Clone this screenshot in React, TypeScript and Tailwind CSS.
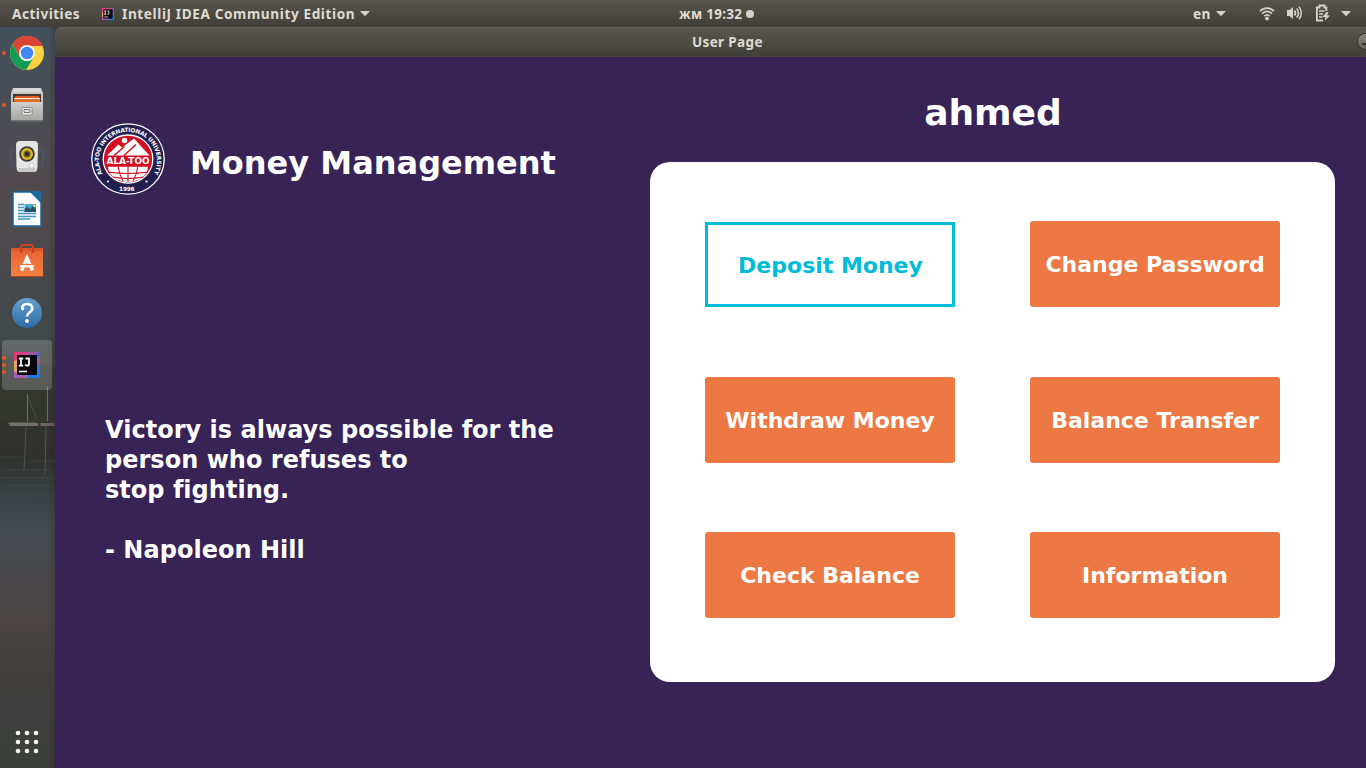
import React from "react";

const actions = [
  { label: "Deposit Money", focused: true },
  { label: "Change Password" },
  { label: "Withdraw Money", lowered: true },
  { label: "Balance Transfer", lowered: true },
  { label: "Check Balance" },
  { label: "Information" },
];

function Caret() {
  return (
    <svg width="10" height="6" viewBox="0 0 10 6" className="shrink-0">
      <path d="M0 0h10L5 5.2z" fill="#d3d2cd" />
    </svg>
  );
}

function IntellijIcon({ size, id }: { size: number; id: string }) {
  return (
    <svg width={size} height={size} viewBox="0 0 26 26">
      <defs>
        <linearGradient id={id} x1="0" y1="0" x2="1" y2="0.9">
          <stop offset="0" stopColor="#f0347e" />
          <stop offset="0.4" stopColor="#c8488c" />
          <stop offset="0.6" stopColor="#3b6fe0" />
          <stop offset="1" stopColor="#127df0" />
        </linearGradient>
      </defs>
      <rect width="26" height="26" fill={"url(#" + id + ")"} />
      <path d="M0 9L3 8v15l-3-4z" fill="#e9a05a" />
      <path d="M0 19l5 4h9v3H0z" fill="#a65ab5" />
      <path d="M15 0h4l7 7v6h-4L14 4z" fill="#9a58a8" />
      <rect x="3" y="3" width="20" height="20" fill="#080808" />
      <path d="M4.800 6.500h4.400M7 6.500v7M4.800 13.600h4.400M11.500 6.500H15v5.200c0 1.400-.7 2-1.900 2-.9 0-1.400-.4-1.900-1" fill="none" stroke="#fff" strokeWidth="1.800" />
      <path d="M5 19.500h8" stroke="#fff" strokeWidth="1.600" />
    </svg>
  );
}

function TopBar() {
  return (
    <header className="flex h-[27px] shrink-0 items-center bg-linear-to-b from-[#57554c] to-[#413f39] pt-px font-['Noto_Sans',sans-serif] text-[14px] font-bold text-[#dfdbd2]">
      <div className="flex w-[679px] items-center pl-3">
        <span className="w-[68px] whitespace-nowrap text-[13.6px] tracking-[0.5px]">Activities</span>
        <span className="ml-[22px] mr-2">
          <IntellijIcon size={12} id="ij-small" />
        </span>
        <span className="w-[234px] whitespace-nowrap text-[13.6px] tracking-[0.61px]">IntelliJ IDEA Community Edition</span>
        <span className="ml-1"><Caret /></span>
      </div>
      <div className="flex grow items-center gap-[3px]">
        <span className="w-[64px] whitespace-nowrap text-[13.5px] tracking-[0.25px]">жм 19:32</span>
        <span className="-mt-px size-2 rounded-full bg-[#d3d2cd]" />
      </div>
      <div className="flex items-center pr-[15px]">
        <span className="w-[18px] text-[13.6px] tracking-[0.3px]">en</span>
        <span className="ml-[5px] mr-[33px]"><Caret /></span>
        <svg width="16" height="14" viewBox="0 0 16 14" fill="none" stroke="#d3d2cd" strokeWidth="1.7">
          <path d="M1 4.200C5 .1 11 .1 15 4.200M3.100 6.700c3-3 6.800-3 9.800 0M5.300 9.200c1.700-1.600 3.700-1.600 5.400 0" />
          <circle cx="8" cy="11.600" r="1.900" fill="#d3d2cd" stroke="none" />
        </svg>
        <svg width="17" height="16" viewBox="0 0 17 16" className="-mt-px ml-[11px]" fill="none" stroke="#d3d2cd" strokeWidth="1.700">
          <path d="M1 5h2.500L7 2v12l-3.500-3H1z" fill="#d3d2cd" stroke="none" />
          <path d="M8.500 5.500c1.200 1.500 1.200 3.500 0 5M10.700 3.500c2.300 2.500 2.300 6.500 0 9" />
          <path d="M13 1.700c3 3.500 3 9.100 0 12.600" strokeWidth="1.500" />
        </svg>
        <svg width="16" height="18" viewBox="0 0 16 18" className="-mt-px ml-[12px]" fill="none" stroke="#d3d2cd" strokeWidth="1.900">
          <path d="M11.300 7V3.500H9.500v-2h-5v2H1.900v13H8" />
          <path d="M4 7h5.500M4 10h4M4 13h3.500" strokeWidth="1.600" />
          <path d="M11.500 8L7.500 13h3l-1 4 5.500-5.500h-3L13.500 8z" fill="#d3d2cd" stroke="none" />
        </svg>
        <span className="ml-[10px]"><Caret /></span>
      </div>
    </header>
  );
}

function Backdrop() {
  return (
    <svg className="absolute inset-0" width="55" height="741" viewBox="0 27 55 741">
      <defs>
        <linearGradient id="sky" x1="0" y1="0" x2="0" y2="1">
          <stop offset="0" stopColor="#43505a" />
          <stop offset="0.100" stopColor="#4a4e55" />
          <stop offset="0.200" stopColor="#514b50" />
          <stop offset="0.280" stopColor="#4f4a4d" />
          <stop offset="0.360" stopColor="#45484b" />
          <stop offset="0.420" stopColor="#42484a" />
          <stop offset="0.460" stopColor="#3c3f3b" />
          <stop offset="0.500" stopColor="#33342e" />
          <stop offset="0.580" stopColor="#30312d" />
          <stop offset="0.630" stopColor="#3a4043" />
          <stop offset="0.680" stopColor="#454b50" />
          <stop offset="0.750" stopColor="#494749" />
          <stop offset="0.800" stopColor="#4b4545" />
          <stop offset="0.850" stopColor="#464241" />
          <stop offset="0.910" stopColor="#3f403f" />
          <stop offset="1" stopColor="#3b3d3b" />
        </linearGradient>
        <linearGradient id="edge">
          <stop offset="0" stopColor="#222" stopOpacity="0" />
          <stop offset="1" stopColor="#222" stopOpacity="0.25" />
        </linearGradient>
      </defs>
      <rect y="27" width="55" height="741" fill="url(#sky)" />
      <path d="M0 359l9-2 8-1 9 5 9 3 9 1 11 4v53H0z" fill="#34372f" opacity=".65" />
      <path d="M27.500 394v28M47.500 386v35" stroke="#74766f" opacity=".85" />
      <path d="M28 397l9 23" stroke="#64645e" strokeWidth=".5" />
      <path d="M8 422.500h28l3 1.500-2 2H10z" fill="#72716b" />
      <path d="M40 423h15v3H41z" fill="#73605e" />
      <path d="M26 427l-2 43M46 427l-1 47" stroke="#65655f" opacity=".65" />
      <path d="M0 457h23M31 461h24M4 470h45M0 478h55M8 486h42M0 497h28" stroke="#535b5d" strokeWidth=".7" opacity=".5" />
      <rect x="48" y="27" width="7" height="741" fill="url(#edge)" />
    </svg>
  );
}

function ChromeIcon() {
  return (
    <svg width="34" height="34" viewBox="0 0 34 34">
      <circle cx="17" cy="17" r="17" fill="#ffd040" />
      <path d="M2.300 8.500A17 17 0 0 1 32.600 10H17a8 8 0 0 0-6.800 11z" fill="#db4437" />
      <path d="M2.300 8.500A17 17 0 0 0 16 34l8-13a8 8 0 0 1-14 0z" fill="#0f9d58" />
      <circle cx="17" cy="17" r="8" fill="#f3f5f8" />
      <circle cx="17" cy="17" r="6.200" fill="#4285f4" />
    </svg>
  );
}

function FilesIcon() {
  return (
    <svg width="34" height="36" viewBox="0 0 34 36">
      <defs>
        <linearGradient id="cab" x1="0" y1="0" x2="0" y2="1">
          <stop offset="0" stopColor="#cfcfcd" />
          <stop offset="1" stopColor="#a4a4a2" />
        </linearGradient>
      </defs>
      <path d="M3 1h28l2 5v26a2 2 0 0 1-2 2H3a2 2 0 0 1-2-2V6z" fill="url(#cab)" />
      <path d="M4 1h26l1 4H3z" fill="#d8d8d6" />
      <rect x="3" y="7" width="28" height="9" fill="#46372e" />
      <rect x="5" y="9" width="24" height="3" fill="#e15d20" />
      <rect x="4" y="11" width="26" height="1.500" fill="#f4ead6" />
      <rect x="4" y="12.500" width="26" height="2.500" fill="#e46a20" />
      <rect x="1" y="15" width="32" height="19" rx="1" fill="url(#cab)" />
      <path d="M1 33h32v1.500H1z" fill="#747472" />
      <rect x="12" y="20.500" width="10" height="7.500" rx="1" fill="#f4f4f4" stroke="#8b8b89" />
      <path d="M14 22.500h6v3h-6z" fill="#ddd" stroke="#777" />
    </svg>
  );
}

function SpeakerIcon() {
  return (
    <svg width="36" height="34" viewBox="0 0 36 34">
      <path d="M5 6c-4 6-4 15 0 21M31 6c4 6 4 15 0 21M3 7c-3 6-3 13 0 19M33 7c3 6 3 13 0 19" fill="none" stroke="#49618a" opacity=".55" />
      <path d="M11 1h14q4 0 4 4l-.5 22q0 5-4 5h-13q-4 0-4-5L7 5q0-4 4-4z" fill="#e5e5e3" />
      <path d="M9 28h18l-2 4H11z" fill="#c8c8c6" />
      <circle cx="18" cy="14" r="7.800" fill="#3b3b36" />
      <circle cx="18" cy="14" r="6" fill="#d8b52c" />
      <circle cx="18" cy="14" r="3.500" fill="#706018" />
      <circle cx="18" cy="14" r="2" fill="#292c2e" />
      <circle cx="22.500" cy="25.500" r="2.500" fill="#f8f8f8" stroke="#ccc" />
    </svg>
  );
}

function WriterIcon() {
  return (
    <svg width="30" height="36" viewBox="0 0 30 36">
      <path d="M1 1h18l10 10v24H1z" fill="#fafafa" stroke="#176699" strokeWidth="1.500" />
      <path d="M19 0h9l1 1v11z" fill="#176da3" />
      <path d="M6 13.500h6M6 16.500h6M6 19.500h6M6 22.500h18M6 25.500h18M6 28h12" stroke="#3e98c6" strokeWidth="1.700" />
      <rect x="12.500" y="13" width="11.500" height="8" fill="#49a8d8" />
      <path d="M12.500 21v-3l3-2 3 2 2-3 3.500 3v3z" fill="#245263" />
      <circle cx="22.300" cy="14.700" r="1.300" fill="#f3d94c" />
    </svg>
  );
}

function SoftwareIcon() {
  return (
    <svg width="34" height="34" viewBox="0 0 34 34">
      <defs>
        <linearGradient id="bag" x1="0" y1="0" x2="0" y2="1">
          <stop offset="0" stopColor="#e96132" />
          <stop offset="1" stopColor="#f48142" />
        </linearGradient>
      </defs>
      <rect x="1" y="4" width="32" height="29" fill="url(#bag)" />
      <path d="M1 4h32v3H1z" fill="#df562b" />
      <path d="M11 9V3q0-2 2-2h8q2 0 2 2v6" fill="none" stroke="#c5431f" strokeWidth="2.200" />
      <path d="M11.500 26.500L17 14 22.500 26.500" fill="none" stroke="#fff" strokeWidth="3.400" />
      <path d="M10 22.300h14" stroke="#fff" strokeWidth="2" />
      <path d="M11 20.500h11" stroke="#ed6b37" strokeWidth="1" />
      <path d="M1 32.500h32" stroke="#b6431f" />
    </svg>
  );
}

function HelpIcon() {
  return (
    <svg width="32" height="32" viewBox="0 0 32 32">
      <defs>
        <linearGradient id="help" x1="0" y1="0" x2="0" y2="1">
          <stop offset="0" stopColor="#66a0cf" />
          <stop offset="1" stopColor="#2b6ca6" />
        </linearGradient>
      </defs>
      <circle cx="16" cy="16" r="15" fill="url(#help)" />
      <path d="M11.500 12c-1-3 1-5 4.500-5 6 0 6.500 5.500 3 8-2 1.500-3 2.500-3 4.500" fill="none" stroke="#fff" strokeWidth="2.600" />
      <circle cx="16" cy="24" r="2" fill="#fff" />
      <circle cx="11.700" cy="11.700" r="1.600" fill="#fff" />
    </svg>
  );
}

function DockItem({ dots = 0, active = false, children }: { dots?: number; active?: boolean; children: React.ReactNode }) {
  return (
    <div className="flex h-[52px] w-full items-center">
      <div className={active ? "relative ml-[2px] flex size-[50px] items-center justify-center rounded-[4px] bg-white/18" : "relative ml-[2px] flex size-[50px] items-center justify-center"}>
        <div className={active ? "absolute left-0 flex flex-col gap-[3px]" : "absolute left-0 flex flex-col"}>
          {Array.from({ length: dots }, (_, i) => (
            <span key={i} className="size-[4px] rounded-full bg-[#e95420]" />
          ))}
        </div>
        {children}
      </div>
    </div>
  );
}

function Dock() {
  return (
    <aside className="relative w-[55px] shrink-0">
      <Backdrop />
      <div className="relative flex h-full flex-col">
        <DockItem dots={1}><ChromeIcon /></DockItem>
        <DockItem dots={1}><FilesIcon /></DockItem>
        <DockItem><SpeakerIcon /></DockItem>
        <DockItem><WriterIcon /></DockItem>
        <DockItem><SoftwareIcon /></DockItem>
        <DockItem><HelpIcon /></DockItem>
        <DockItem dots={3} active><IntellijIcon size={26} id="ij-large" /></DockItem>
        <svg width="24" height="24" viewBox="0 0 24 24" className="mt-auto mb-[14px] ml-[15px]" fill="#f2f1f0">
          {[3, 12, 21].map((y) => [3, 12, 21].map((x) => <circle key={x + "-" + y} cx={x} cy={y} r="2.300" />))}
        </svg>
      </div>
    </aside>
  );
}

function Seal() {
  return (
    <svg width="76" height="76" viewBox="-38 -38 76 76" className="shrink-0">
      <defs>
        <path id="seal-arc" d="M-25.500 15A29 28.500 0 1 1 25.500 15" />
        <clipPath id="globe"><path d="M-24 7.500h48v16h-48z" /></clipPath>
      </defs>
      <ellipse rx="36.200" ry="35.200" fill="#221f50" stroke="#fff" strokeWidth="1.300" />
      <ellipse rx="24.800" ry="24" fill="#d30e22" stroke="#fff" strokeWidth="1.300" />
      <circle cx="-3.500" cy="-18.500" r="2.800" fill="#fff" />
      <path d="M-21-3.500L-9.500-14.500-6-11.500 6-20.500 21.500-3.500z" fill="#fff" />
      <path d="M-14-3.500L-3.500-12.500M-4-3.500L8-14.500" stroke="#d30e22" strokeWidth="1.500" />
      <text y="5" textAnchor="middle" textLength="43" lengthAdjust="spacingAndGlyphs" className="fill-white font-['DejaVu_Sans',sans-serif] text-[8.500px] font-bold">ALA-TOO</text>
      <g clipPath="url(#globe)">
        <path d="M-20 7.500h40A20 15.500 0 0 1-20 7.500z" fill="#fff" />
        <path d="M0 7v16M-10 7q1 8 5 15M10 7q-1 8-5 15M-20 13q20 3 40 0M-15 18q15 3 30 0" fill="none" stroke="#d30e22" strokeWidth="1.100" />
      </g>
      <text className="fill-white font-['DejaVu_Sans',sans-serif] text-[5.800px] font-bold">
        <textPath href="#seal-arc" textLength="118">ALA-TOO INTERNATIONAL UNIVERSITY</textPath>
      </text>
      <text x="-1.200" y="31.500" textAnchor="middle" textLength="15.500" className="fill-white font-['DejaVu_Sans',sans-serif] text-[5.800px] font-bold">1996</text>
      <circle cx="-20" cy="22.500" r="1.100" fill="#fff" />
      <circle cx="18.500" cy="22.500" r="1.100" fill="#fff" />
    </svg>
  );
}

export default function App() {
  return (
    <div className="flex h-[768px] w-[1366px] flex-col overflow-hidden bg-[#3f3e39]">
      <TopBar />
      <div className="flex min-h-0 grow">
        <Dock />
        <section className="flex grow flex-col">
          <div className="relative flex h-[30px] shrink-0 items-center overflow-hidden rounded-tl-[6px] border-t border-[#656258] bg-linear-to-b from-[#59574e] to-[#403f39] pl-[637px] font-['Noto_Sans',sans-serif] text-[13.500px] font-bold text-[#dfdbd2]">
            <span className="whitespace-nowrap tracking-[0.35px]">User Page</span>
            <span className="absolute left-[1302px] top-[5px] flex size-[17px] items-center rounded-full border border-[#34332e] bg-linear-to-b from-[#8c8a81] to-[#65635b] pl-[4px]">
              <span className="mt-[5px] h-[2px] w-[7px] bg-[#34332e]" />
            </span>
          </div>
          <main className="flex grow bg-[#382357] font-['DejaVu_Sans',sans-serif] font-bold text-white">
            <div className="w-[595px] shrink-0 pl-[35px] pt-[64px]">
              <div className="flex h-[76px] items-center">
                <Seal />
                <h1 className="ml-[24px] mt-[8px] whitespace-nowrap text-[32px] leading-[38px]">Money Management</h1>
              </div>
              <div className="mt-[218px] ml-[15px] whitespace-pre text-[24px] leading-[30px] tracking-[0.02px] [font-variant-ligatures:none]">
                {"Victory is always possible for the\nperson who refuses to\nstop fighting.\n\n- Napoleon Hill"}
              </div>
            </div>
            <div className="w-[685px]">
              <h2 className="flex h-[105px] items-center justify-center pt-[6px] pl-px text-[36px]">ahmed</h2>
              <div className="grid h-[520px] grid-cols-[250px_250px] grid-rows-[86px_86px_86px] content-start gap-x-[75px] gap-y-[69.500px] rounded-[20px] bg-white pl-[55px] pt-[59px]">
                {actions.map((a) => (
                  <button
                    key={a.label}
                    className={
                      a.focused
                        ? "mt-px h-[85px] whitespace-nowrap border-3 border-[#00bcd8] bg-white pt-px pl-px text-[22px] text-[#00bcd8]"
                        : a.lowered
                          ? "h-[86px] whitespace-nowrap rounded-[3px] bg-[#ee7843] pt-px text-[22px] text-white"
                          : "h-[86px] whitespace-nowrap rounded-[3px] bg-[#ee7843] text-[22px] text-white"
                    }
                  >
                    {a.label}
                  </button>
                ))}
              </div>
            </div>
          </main>
        </section>
      </div>
    </div>
  );
}
